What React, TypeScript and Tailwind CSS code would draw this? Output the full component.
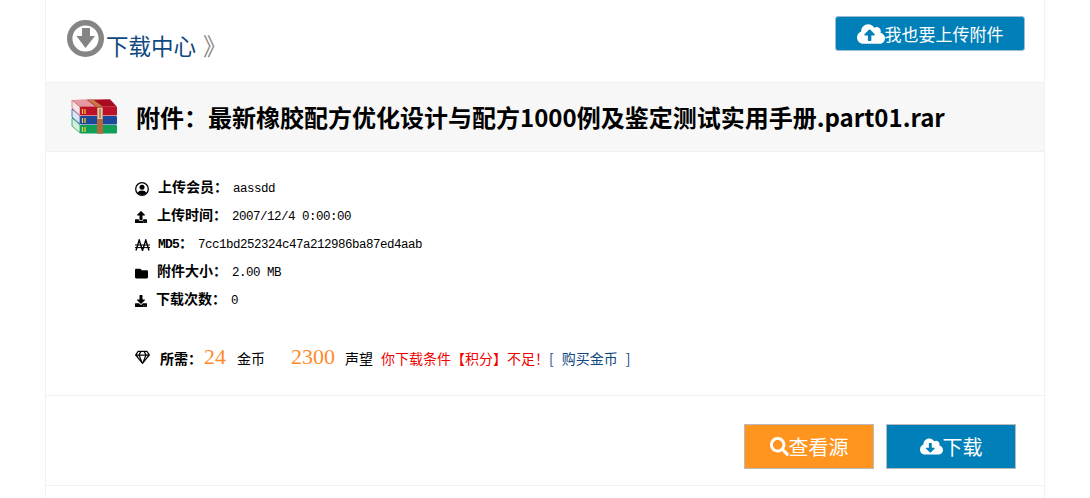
import type { ReactNode } from "react";
import { FaCloudUploadAlt, FaCloudDownloadAlt, FaSearch, FaUpload, FaFolder, FaDownload, FaRegGem } from "react-icons/fa";

const CJK = "font-['Noto_Sans_CJK_SC',sans-serif]";
const MONO = "font-['Liberation_Mono','Noto_Sans_CJK_SC',monospace]";
const SERIF = "font-['Liberation_Serif',serif]";

function RarIcon() {
  return (
    <svg width="48" height="36" viewBox="0 0 48 36" className="shrink-0">
      {/* green book */}
      <path d="M2 19l8 7v8l-8-7z" fill="#d8efe0" stroke="#17a35a" strokeWidth="0.8" />
      <rect x="10" y="26" width="37" height="8.5" rx="1" fill="#0f9f58" />
      {/* blue book */}
      <path d="M2 10l8 7v8l-8-7z" fill="#dfe6f3" stroke="#2c56a0" strokeWidth="0.8" />
      <rect x="10" y="17" width="37" height="8.5" rx="1" fill="#1b4a9b" />
      {/* red book */}
      <path d="M2 1l8 7v8.5L2 9z" fill="#f6e3e4" stroke="#c9707a" strokeWidth="0.8" />
      <path d="M2 1L40 0.3l7 7.4H10z" fill="#a90c20" />
      <path d="M2 1h15l9 6.7H10z" fill="#e59aa2" />
      <rect x="10" y="7.7" width="37" height="8.8" rx="1" fill="#bb1229" />
      {/* gold marks */}
      <path d="M12.5 10v5M15 10v5M12.5 19v5M15 19v5M12.5 28v5M15 28v5" stroke="#f5cf3d" strokeWidth="1.2" />
      {/* strap */}
      <path d="M17 0.5h6l10 7.2h-6z" fill="#c77a4a" />
      <rect x="27" y="7.7" width="6" height="27" fill="#b5663a" />
      <rect x="27.5" y="9" width="5" height="11" fill="#e6c6a6" />
      <rect x="29" y="10" width="2" height="9" fill="#b98a66" />
    </svg>
  );
}

function DownloadCircle() {
  return (
    <svg width="37" height="37" viewBox="0 0 37 37" className="shrink-0">
      <circle cx="18.5" cy="18.5" r="15.8" fill="none" stroke="#858585" strokeWidth="5.4" />
      <path d="M15 8h8v8h5l-9.5 12L9.5 16H15z" fill="#858585" />
    </svg>
  );
}

function UserRing() {
  return (
    <svg width="14" height="14" viewBox="0 0 14 14">
      <circle cx="7" cy="7" r="6.3" fill="none" stroke="#000" strokeWidth="1.3" />
      <circle cx="7" cy="5.2" r="2.5" fill="#000" />
      <path d="M2.6 11.2C3.2 9 5 8.4 7 8.4s3.8.6 4.4 2.8A6 6 0 0 1 7 13a6 6 0 0 1-4.4-1.8z" fill="#000" />
    </svg>
  );
}

function NairaIcon() {
  return (
    <svg width="15" height="12" viewBox="0 0 15 12" fill="none" stroke="#000" strokeWidth="1.4">
      <path d="M1 11.5L4.2 1l3.3 10.5L10.8 1 14 11.5" />
      <path d="M0 6h15M0 8.6h15" strokeWidth="1" />
    </svg>
  );
}

function InfoRow({ icon, iconWidth, label, value }: { icon: ReactNode; iconWidth: string; label: ReactNode; value: string }) {
  return (
    <div className="flex h-7 items-baseline leading-7">
      <span className={`${iconWidth} flex shrink-0 items-center self-center`}>{icon}</span>
      <span className="text-sm font-bold text-black">{label}</span>
      <span className={`${MONO} ml-[5px] text-[12.5px] tracking-[-0.5px] text-black`}>{value}</span>
    </div>
  );
}

export default function App() {
  return (
    <div className={`${CJK} h-[498px] w-[1090px] overflow-hidden bg-white`}>
      <div className="mx-[45px] h-[498px] w-[1000px] border-x border-[#f2f2f2]">
        <header className="flex h-[82px] items-start justify-between pl-[21px] pr-[19px]">
          <div className="flex items-start pt-[20px]">
            <DownloadCircle />
            <span className="ml-[2px] mt-[9px] text-[22.5px] leading-8 text-[#10487f]">下载中心</span>
            <span className="ml-[7px] mt-[9px] text-[24px] leading-8 text-[#8a8a8a]">》</span>
          </div>
          <button className="mt-4 flex h-[35px] w-[190px] items-center justify-center rounded-[3px] border border-[#9fbdd0] bg-[#007fb8] text-[17px] text-white">
            <FaCloudUploadAlt className="text-[28px]" />
            我也要上传附件
          </button>
        </header>

        <div className="flex h-[70px] items-center border-y border-[#f0f0f0] bg-[#f7f7f7] pl-[24px]">
          <RarIcon />
          <h1 className="ml-[18px] text-2xl font-bold text-black">
            附件：最新橡胶配方优化设计与配方1000例及鉴定测试实用手册.part01.rar
          </h1>
        </div>

        <div className="h-[244px] border-b border-[#f0f0f0] pl-[89px] pt-[23px]">
          <InfoRow icon={<UserRing />} iconWidth="w-[23px]" label="上传会员：" value="aassdd" />
          <InfoRow icon={<FaUpload className="text-[12px]" />} iconWidth="w-[22px]" label="上传时间：" value="2007/12/4 0:00:00" />
          <InfoRow
            icon={<NairaIcon />}
            iconWidth="w-[23px]"
            label={<><span className={`${MONO} text-[13px] tracking-[-0.8px]`}>MD5</span>：</>}
            value="7cc1bd252324c47a212986ba87ed4aab"
          />
          <InfoRow icon={<FaFolder className="text-[13px]" />} iconWidth="w-[22px]" label="附件大小：" value="2.00 MB" />
          <InfoRow icon={<FaDownload className="text-[12px]" />} iconWidth="w-[21px]" label="下载次数：" value="0" />

          <div className="mt-[28px] flex h-7 items-baseline text-sm leading-7 text-black">
            <FaRegGem className="mr-[10px] w-[15px] self-center text-[15px]" />
            <span className="font-bold">所需：</span>
            <span className={`${SERIF} ml-[2px] text-[22px] text-[#ff8a2b]`}>24</span>
            <span className="ml-[11px]">金币</span>
            <span className={`${SERIF} ml-[26px] text-[22px] text-[#ff8a2b]`}>2300</span>
            <span className="ml-[10px]">声望</span>
            <span className="ml-[8px] text-[#f00000]">你下载条件【积分】不足！</span>
            <span className="flex gap-[8px] text-[#10487f]">
              <span>[</span>
              <span>购买金币</span>
              <span>]</span>
            </span>
          </div>
        </div>

        <div className="flex h-[90px] items-start justify-end gap-[12px] border-b border-[#f0f0f0] pr-[28px] pt-[28px]">
          <button className="flex h-[45px] w-[130px] items-center justify-center border border-[#bbbbbb] bg-[#ff951f] text-xl text-white">
            <FaSearch className="text-[19px]" />
            查看源
          </button>
          <button className="flex h-[45px] w-[130px] items-center justify-center border border-[#bbbbbb] bg-[#007fb8] text-xl text-white">
            <FaCloudDownloadAlt className="text-[23px]" />
            下载
          </button>
        </div>
      </div>
    </div>
  );
}
